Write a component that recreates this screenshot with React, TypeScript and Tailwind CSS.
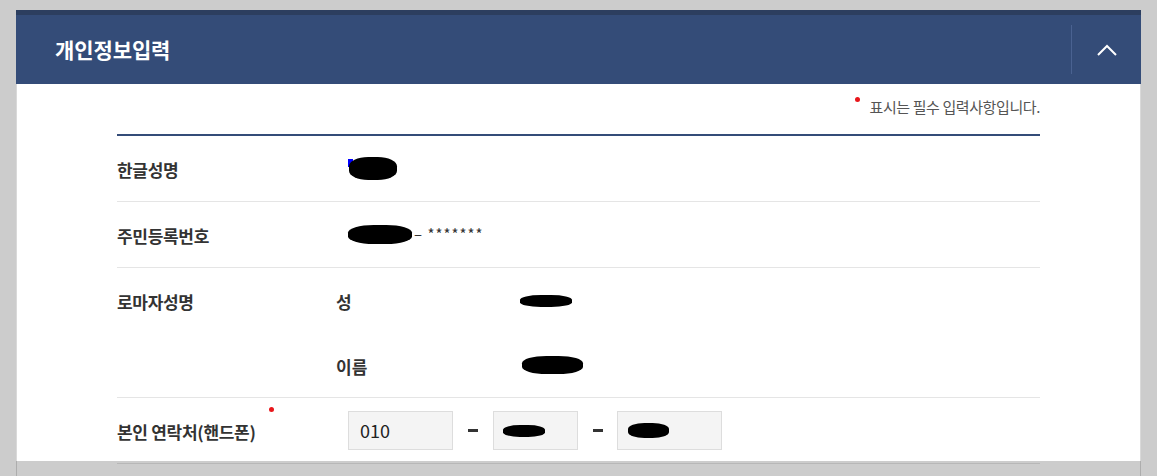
import React from "react";

const font = { fontFamily: '"Noto Sans CJK KR", "Noto Sans", sans-serif' };

function Blob({ className }: { className: string }) {
  return <span className={"block bg-black rounded-[40%] " + className} />;
}

function Dash({ w }: { w: string }) {
  return (
    <span className={"flex justify-center " + w}>
      <span className="block w-[10px] h-[3px] bg-[#333]" />
    </span>
  );
}

function Row({ label, children, required }: { label: string; children: React.ReactNode; required?: boolean }) {
  return (
    <div className="flex items-center h-[66px] border-b border-[#e5e5e5]">
      <div className="relative w-[231px] text-[17px] font-bold text-[#333] pt-[3px] tracking-[-0.3px]">
        {label}
        {required && <span className="absolute left-[152px] -top-[9px] w-[5px] h-[5px] rounded-full bg-[#e8161b]" />}
      </div>
      <div className="flex-1">{children}</div>
    </div>
  );
}

export default function App() {
  return (
    <div className="relative w-[1157px] h-[476px] overflow-hidden bg-[#cccccc] pt-[10px] pl-[16px]" style={font}>
      <div className="w-[1125px] h-[600px] bg-white border-l border-r border-[#d9d9d9]">
        <div className="h-[5px] bg-[#2c3e5f] -mx-px" />
        <div className="flex items-center h-[69px] bg-[#344c78] -mx-px">
          <h2 className="flex-1 pl-[39px] text-[21px] font-bold text-white tracking-[-0.1px]">개인정보입력</h2>
          <div className="w-px h-[49px] bg-[#4a6291]" />
          <div className="w-[69px] flex justify-center">
            <svg width="20" height="12" viewBox="0 0 20 12" fill="none" stroke="white" strokeWidth="2">
              <path d="M1 11 L10 2 L19 11" />
            </svg>
          </div>
        </div>
        <div className="px-[100px]">
          <div className="flex justify-end pt-[12px] h-[50px]">
            <p className="relative text-[15px] text-[#555] tracking-[-0.4px]">
              <span className="absolute -left-[15px] top-[1px] w-[5px] h-[5px] rounded-full bg-[#e8161b]" />
              표시는 필수 입력사항입니다.
            </p>
          </div>
          <div className="h-[2px] bg-[#344c78]" />
          <Row label="한글성명">
            <div className="relative w-[50px] h-[24px]">
              <span className="absolute left-0 top-[2px] w-[5px] h-[8px] bg-[#0000ff]" />
              <Blob className="absolute left-[1px] top-0 w-[48px] h-[23px]" />
            </div>
          </Row>
          <Row label="주민등록번호">
            <div className="flex items-center">
              <Blob className="w-[64px] h-[19px]" />
              <span className="text-[15px] text-[#333] ml-[2px] tracking-[1px]">– *******</span>
            </div>
          </Row>
          <div className="flex border-b border-[#e5e5e5]">
            <div className="w-[219px] h-[65px] flex items-center text-[17px] font-bold text-[#333] pt-[3px] tracking-[-0.3px]">로마자성명</div>
            <div className="flex-1">
              <div className="flex items-center h-[65px]">
                <span className="w-[184px] text-[17px] font-bold text-[#333] pt-[3px]">성</span>
                <Blob className="w-[52px] h-[12px] rounded-[30%]" />
              </div>
              <div className="flex items-center h-[64px]">
                <span className="w-[184px] text-[17px] font-bold text-[#333] pt-[3px]">이름</span>
                <Blob className="ml-[2px] w-[61px] h-[18px] rounded-[20%]" />
              </div>
            </div>
          </div>
          <Row label="본인 연락처(핸드폰)" required>
            <div className="flex items-center">
              <div className="w-[105px] h-[39px] bg-[#f4f4f4] border border-[#dddddd] flex items-center pl-[11px] text-[18px] text-[#222]">010</div>
              <Dash w="w-[40px]" />
              <div className="w-[85px] h-[39px] bg-[#f4f4f4] border border-[#dddddd] flex items-center pl-[9px]">
                <Blob className="w-[42px] h-[12px]" />
              </div>
              <Dash w="w-[39px]" />
              <div className="w-[105px] h-[39px] bg-[#f4f4f4] border border-[#dddddd] flex items-center pl-[10px]">
                <Blob className="w-[41px] h-[15px]" />
              </div>
            </div>
          </Row>
        </div>
      </div>
      <div className="absolute left-[16px] top-[461px] w-[1125px] h-[15px] bg-black/20" />
    </div>
  );
}
